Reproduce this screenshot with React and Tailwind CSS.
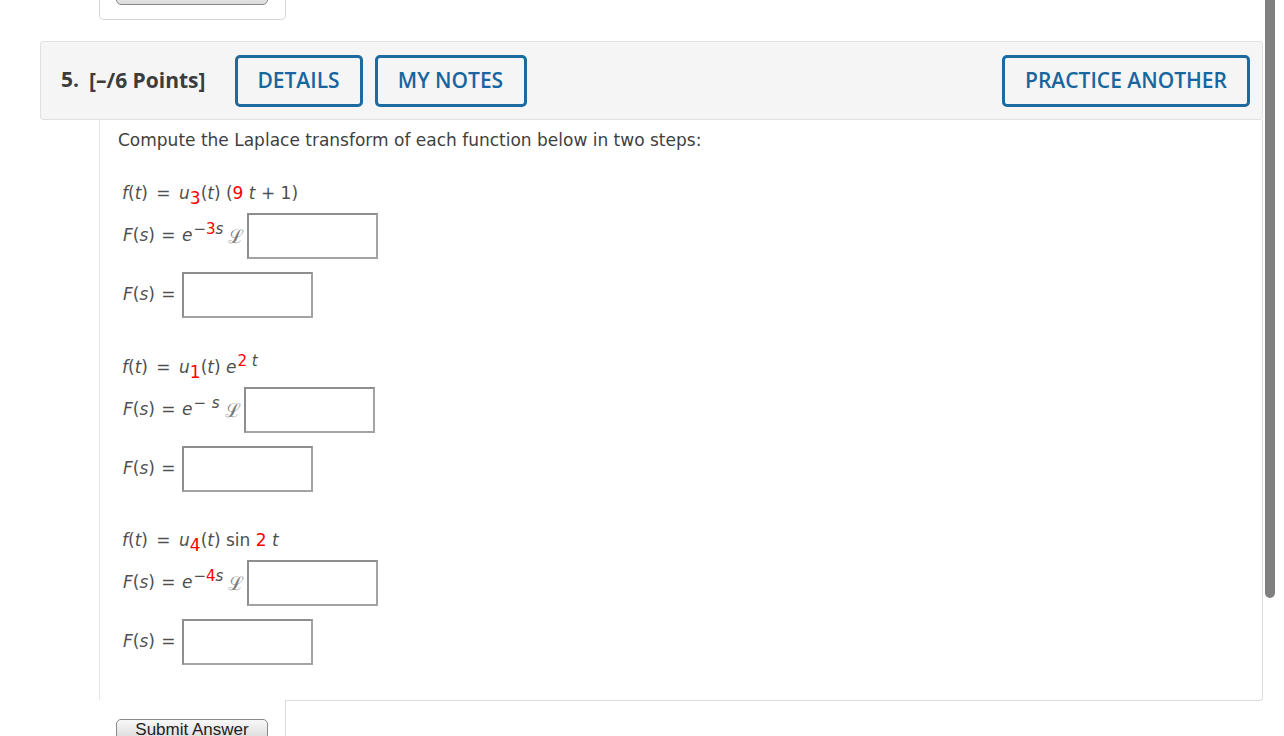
import React from 'react'

const mathFont = { fontFamily: '"DejaVu Sans", Verdana, sans-serif' }

const Red = ({ children }) => (
  <span className="text-[#ff0000] not-italic">{children}</span>
)

const I = ({ children }) => <span className="italic">{children}</span>

const Eq = ({ pad = 'px-[3px]' }) => <span className={pad}> = </span>

const Box = () => (
  <span className="inline-block align-middle w-[131px] h-[46px] border-2 border-[#a3a3a3] border-t-[#8e8e8e] border-l-[#8e8e8e] bg-white"></span>
)

const Sub = ({ children }) => (
  <span className="relative top-[5px] text-[#ff0000] not-italic">{children}</span>
)

const Sup = ({ children }) => (
  <span className="relative -top-[7px] text-[15px] ml-[1px]">{children}</span>
)

const Script = () => (
  <span className="text-[#7a7a7a] text-[19px] ml-[5px] mr-[3px]" style={{ fontFamily: '"DejaVu Serif", serif' }}>ℒ</span>
)

const Group = ({ fLine, exp }) => (
  <div className="whitespace-pre">
    <div className="h-[26px] flex items-center pl-[4px]"><span>{fLine}</span></div>
    <div className="h-[46px] mt-[6px] flex items-center pl-[5px]">
      <span><I>F</I>(<I>s</I>)<Eq pad="px-[1px]" /><I>e</I><Sup>{exp}</Sup></span>
      <Script />
      <Box />
    </div>
    <div className="h-[46px] mt-[13px] flex items-center pl-[5px]">
      <span><I>F</I>(<I>s</I>)<Eq pad="px-[1px]" /></span>
      <span className="flex"><Box /></span>
    </div>
  </div>
)

const SubmitButton = () => (
  <button
    className="w-[152px] h-[21px] rounded-[5px] border border-[#8a8a8a] bg-gradient-to-b from-[#f8f8f8] to-[#dcdcdc] text-[17px] leading-[19px] text-[#222]"
    style={{ fontFamily: '"Liberation Sans", Arial, sans-serif' }}
  >
    Submit Answer
  </button>
)

const OutlineButton = ({ label, width }) => (
  <button
    className={`${width} h-[52px] rounded-[5px] border-[3px] border-[#1d6aa0] text-[#1766a0] text-[21px] font-semibold`}
    style={{ fontFamily: '"Open Sans", sans-serif' }}
  >
    {label}
  </button>
)

export default function App() {
  return (
    <div className="relative w-[1284px] h-[736px] bg-white overflow-hidden">
      {/* previous question's submit tab */}
      <div className="ml-[99px] w-[187px] h-[20px] border-l border-r border-b border-[#d6d6d6] rounded-b-[5px] overflow-hidden flex flex-col justify-end pb-[13px] pl-[16px]">
        <div className="shrink-0">
          <SubmitButton />
        </div>
      </div>

      {/* header */}
      <div
        className="mt-[21px] ml-[40px] w-[1223px] h-[79px] bg-[#f5f5f5] border border-[#e1e1e1] rounded-[3px] flex items-center pl-[20px] pr-[12px]"
        style={{ fontFamily: '"Open Sans", sans-serif' }}
      >
        <span className="text-[21px] font-bold text-[#3c3c3c] -mt-[2px]">5.</span>
        <span className="text-[21px] font-bold text-[#3c3c3c] ml-[10px]">[–/6 Points]</span>
        <div className="ml-[29px] flex gap-[12px]">
          <OutlineButton label="DETAILS" width="w-[128px]" />
          <OutlineButton label="MY NOTES" width="w-[152px]" />
        </div>
        <div className="ml-auto">
          <OutlineButton label="PRACTICE ANOTHER" width="w-[248px]" />
        </div>
      </div>

      {/* question body */}
      <div
        className="ml-[99px] w-[1164px] h-[581px] border-l border-r border-b border-l-[#e6e6e6] border-r-[#dcdcdc] border-b-[#dcdcdc] rounded-br-[4px] pl-[18px] pt-[8px] text-[17px] text-[#3f3f3f]"
        style={mathFont}
      >
        <div className="h-[26px] flex items-center">Compute the Laplace transform of each function below in two steps:</div>

        <div className="mt-[27px] text-[#4f4f4f]">
          <Group
            fLine={<><I>f</I>(<I>t</I>)<Eq /><I>u</I><Sub>3</Sub>(<I>t</I>) (<Red>9</Red> <I>t</I> + 1)</>}
            exp={<>−<Red>3</Red><I>s</I></>}
          />
          <div className="mt-[37px]">
            <Group
              fLine={<><I>f</I>(<I>t</I>)<Eq /><I>u</I><Sub>1</Sub>(<I>t</I>) <I>e</I><Sup><Red>2</Red> <I>t</I></Sup></>}
              exp={<>− <span className="italic ml-[1px]">s</span></>}
            />
          </div>
          <div className="mt-[36px]">
            <Group
              fLine={<><I>f</I>(<I>t</I>)<Eq /><I>u</I><Sub>4</Sub>(<I>t</I>) sin <Red>2</Red> <I>t</I></>}
              exp={<>−<Red>4</Red><I>s</I></>}
            />
          </div>
        </div>
      </div>

      {/* this question's submit tab */}
      <div className="relative -mt-px ml-[99px] w-[187px] h-[40px] bg-white border-r border-[#dcdcdc] pt-[17px] pl-[17px]">
        <SubmitButton />
      </div>

      {/* scrollbar thumb */}
      <div className="absolute right-[9px] top-0 w-[10px] h-[598px] bg-[#808080] rounded-b-[5px]"></div>
    </div>
  )
}
